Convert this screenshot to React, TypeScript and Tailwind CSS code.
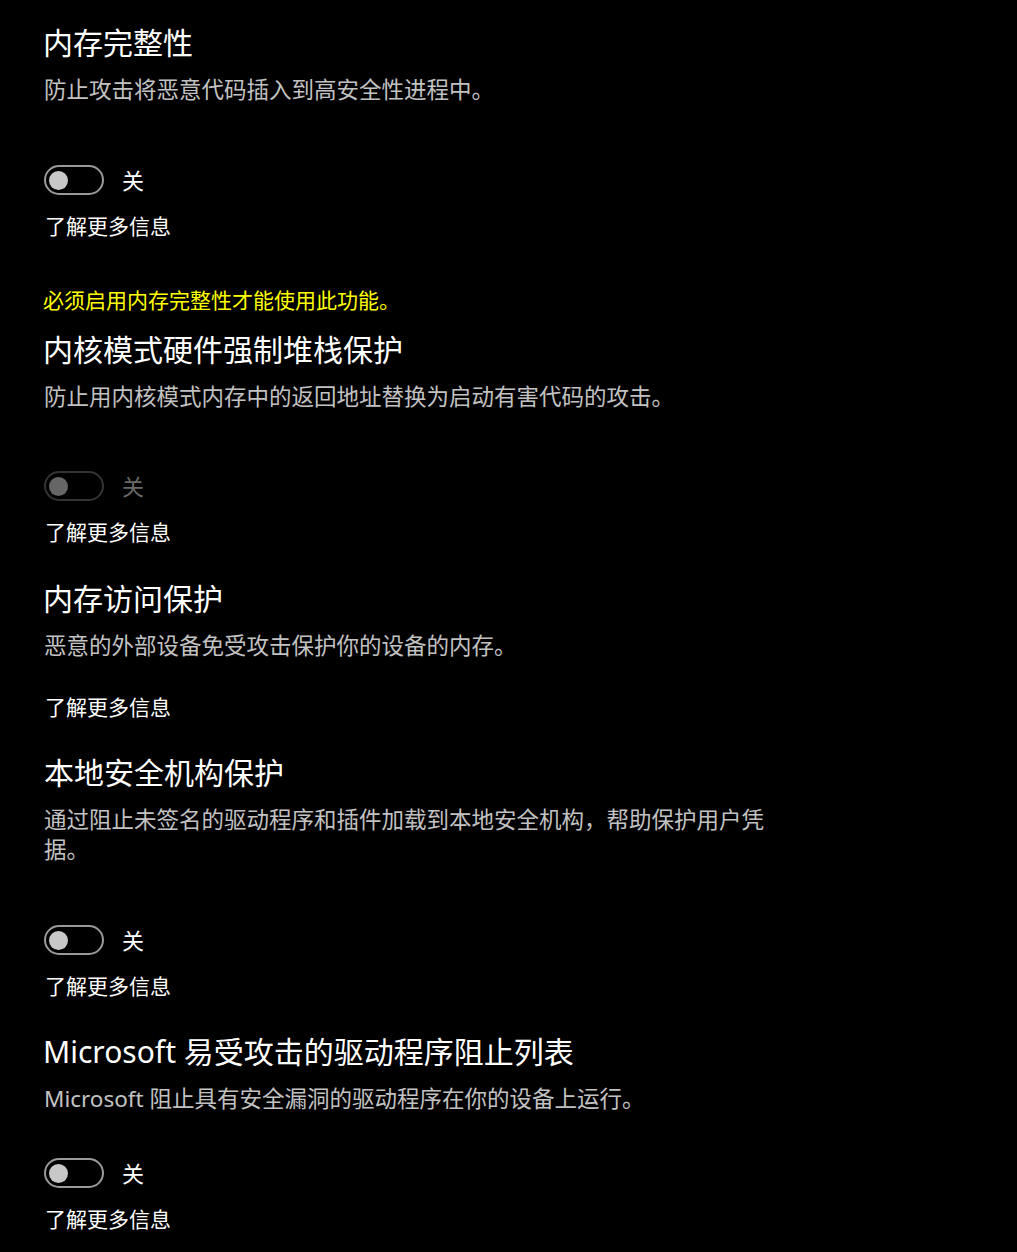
import React from "react";

const FONT = {
  fontFamily:
    '"Segoe UI", "Noto Sans", "Noto Sans CJK SC", sans-serif',
};

function Toggle({ disabled = false }: { disabled?: boolean }) {
  return (
    <div className="flex h-[30px] items-center">
      <div
        className={
          disabled
            ? "flex h-[30px] w-[60px] items-center rounded-full border-2 border-[#333333] pl-[3px]"
            : "flex h-[30px] w-[60px] items-center rounded-full border-2 border-[#9a9a9a] pl-[3px]"
        }
      >
        <div
          className={
            disabled
              ? "h-[19px] w-[19px] rounded-full bg-[#666666]"
              : "h-[19px] w-[19px] rounded-full bg-[#c8c8c8]"
          }
        />
      </div>
      <span
        className={
          disabled
            ? "ml-[18px] text-[22px] leading-[30px] text-[#6a6a6a]"
            : "ml-[18px] text-[22px] leading-[30px] text-white"
        }
      >
        关
      </span>
    </div>
  );
}

function Title({ children, className = "" }: { children: React.ReactNode; className?: string }) {
  return (
    <div className={"text-[30px] leading-[40px] text-white " + className}>{children}</div>
  );
}

function Desc({ children, className = "" }: { children: React.ReactNode; className?: string }) {
  return (
    <div className={"max-w-[730px] text-[22.5px] leading-[30px] text-[#c2c2c2] " + className}>
      {children}
    </div>
  );
}

function Link({ className = "" }: { className?: string }) {
  return (
    <div className={"text-[21px] leading-[30px] text-white pl-[2px] " + className}>了解更多信息</div>
  );
}

export default function App() {
  return (
    <div
      className="min-h-[1252px] w-full bg-black pl-[43px] pt-[23px] text-white"
      style={FONT}
    >
      {/* Section 1 */}
      <Title>内存完整性</Title>
      <Desc className="mt-[12px] pl-[1px]">防止攻击将恶意代码插入到高安全性进程中。</Desc>
      <div className="mt-[60px] pl-[1px]">
        <Toggle />
      </div>
      <Link className="mt-[16px]" />

      {/* Section 2 */}
      <div className="mt-[44px] text-[21px] leading-[30px] text-[#ffff00]">
        必须启用内存完整性才能使用此功能。
      </div>
      <Title className="mt-[15px]">内核模式硬件强制堆栈保护</Title>
      <Desc className="mt-[12px] pl-[1px]">防止用内核模式内存中的返回地址替换为启动有害代码的攻击。</Desc>
      <div className="mt-[59px] pl-[1px]">
        <Toggle disabled />
      </div>
      <Link className="mt-[16px]" />

      {/* Section 3 */}
      <Title className="mt-[32px]">内存访问保护</Title>
      <Desc className="mt-[12px] pl-[1px]">恶意的外部设备免受攻击保护你的设备的内存。</Desc>
      <Link className="mt-[31px]" />

      {/* Section 4 */}
      <Title className="mt-[31px] pl-[1px]">本地安全机构保护</Title>
      <Desc className="mt-[12px] pl-[1px]">
        通过阻止未签名的驱动程序和插件加载到本地安全机构，帮助保护用户凭据。
      </Desc>
      <div className="mt-[60px] pl-[1px]">
        <Toggle />
      </div>
      <Link className="mt-[16px]" />

      {/* Section 5 */}
      <Title className="mt-[31px]">Microsoft 易受攻击的驱动程序阻止列表</Title>
      <Desc className="mt-[12px] pl-[1px]">
        Microsoft 阻止具有安全漏洞的驱动程序在你的设备上运行。
      </Desc>
      <div className="mt-[44px] pl-[1px]">
        <Toggle />
      </div>
      <Link className="mt-[16px]" />
    </div>
  );
}
